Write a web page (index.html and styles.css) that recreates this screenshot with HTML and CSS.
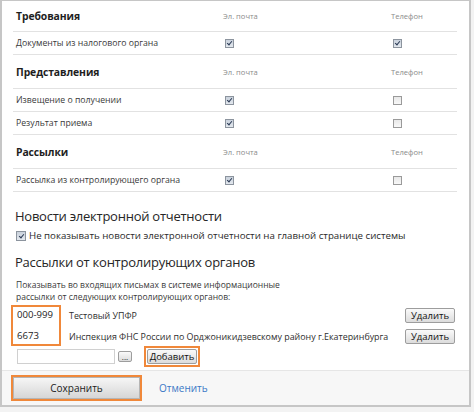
FILE: index.html
```html
<!DOCTYPE html>
<html lang="ru">
<head>
<meta charset="utf-8">
<link rel="stylesheet" href="styles.css">
</head>
<body>
<div class="frame">
  <div class="content">
    <div class="grid">
      <div class="hdr first"><span class="title">Требования</span><span class="col">Эл. почта</span><span class="col">Телефон</span></div>
      <div class="row"><span class="lbl">Документы из налогового органа</span><span class="cell"><i class="cb on"></i></span><span class="cell"><i class="cb on"></i></span></div>
      <div class="hdr"><span class="title">Представления</span><span class="col">Эл. почта</span><span class="col">Телефон</span></div>
      <div class="row"><span class="lbl">Извещение о получении</span><span class="cell"><i class="cb on"></i></span><span class="cell"><i class="cb"></i></span></div>
      <div class="row"><span class="lbl">Результат приема</span><span class="cell"><i class="cb on"></i></span><span class="cell"><i class="cb"></i></span></div>
      <div class="hdr"><span class="title">Рассылки</span><span class="col">Эл. почта</span><span class="col">Телефон</span></div>
      <div class="row"><span class="lbl">Рассылка из контролирующего органа</span><span class="cell"><i class="cb on"></i></span><span class="cell"><i class="cb"></i></span></div>
    </div>

    <h2 class="sec">Новости электронной отчетности</h2>
    <label class="check-line"><i class="cb on"></i>Не показывать новости электронной отчетности на главной странице системы</label>

    <h2 class="sec sec2">Рассылки от контролирующих органов</h2>
    <p class="note">Показывать во входящих письмах в системе информационные<br>рассылки от следующих контролирующих органов:</p>

    <div class="orgs">
      <div class="codes">
        <div class="code">000-999</div>
        <div class="code">6673</div>
      </div>
      <div class="names">
        <div class="org"><span>Тестовый УПФР</span><button class="btn">Удалить</button></div>
        <div class="org"><span>Инспекция ФНС России по Орджоникидзевскому району г.Екатеринбурга</span><button class="btn">Удалить</button></div>
      </div>
    </div>
    <div class="add">
      <span class="input"></span>
      <button class="btn dots">...</button>
      <span class="hl"><button class="btn">Добавить</button></span>
    </div>
  </div>
  <div class="footer">
    <span class="hl save-hl"><button class="save">Сохранить</button></span>
    <a class="cancel" href="#">Отменить</a>
  </div>
</div>
</body>
</html>
```
FILE: styles.css
```css
html, body { margin: 0; padding: 0; }
body {
  background: #f3f3f3;
  font-family: "Open Sans", "Noto Sans", sans-serif;
  color: #333;
  width: 474px;
  height: 412px;
  overflow: hidden;
}
.frame {
  box-sizing: border-box;
  width: 471px;
  height: 407px;
  background: #fff;
  border: 2px solid #c6c6c6;
  border-top-width: 1px;
  display: flex;
  flex-direction: column;
}
.content { padding: 0 12px 0 11px; flex: 1; }
.grid { display: flex; flex-direction: column; }
.hdr, .row {
  display: grid;
  grid-template-columns: 210px 168px 1fr;
  align-items: center;
  border-bottom: 1px solid #e2e2e2;
}
.hdr { height: 33px; }
.hdr.first { height: 30px; }
.row { height: 22px; }
.title { padding-left: 3px; font-weight: 700; font-size: 10.4px; color: #1e1e1e; letter-spacing: -0.1px; }
.col { font-size: 7.6px; color: #8a8a8a; }
.lbl { padding-left: 3px; font-size: 8.7px; color: #3a3a3a; }
.cell { padding-left: 2px; display: flex; align-items: center; }
.cb {
  display: inline-block;
  box-sizing: border-box;
  width: 9px; height: 9px;
  border: 1px solid #9a9a9a;
  background: linear-gradient(#e8e8e8, #f8f8f8);
  position: relative;
}
.cb.on { background: linear-gradient(#c9d1dc, #e3e8ee); border-color: #8c949e; }
.cb.on::after {
  content: "";
  position: absolute;
  left: 2px; top: 0px;
  width: 2px; height: 4px;
  border: solid #2b3a55;
  border-width: 0 1.5px 1.5px 0;
  transform: rotate(40deg);
}
.sec {
  margin: 15px 0 0 2px;
  font-weight: 400;
  font-size: 13px;
  letter-spacing: -0.25px;
  color: #262626;
  line-height: 18px;
}
.sec2 { margin-top: 10px; }
.check-line {
  display: flex; align-items: center; gap: 3px;
  margin: 4px 0 0 3px;
  font-size: 9.7px; color: #2a2a2a;
  line-height: 14px;
}
.check-line .cb { width: 10px; height: 10px; }
.check-line .cb.on::after { left: 2.5px; top: 0.5px; }
.note {
  margin: 8px 0 0 3px;
  font-size: 8.5px;
  line-height: 11.5px;
  color: #3a3a3a;
}
.orgs { display: flex; margin-top: 3px; }
.codes {
  box-sizing: border-box;
  width: 50px;
  height: 41px;
  margin-left: -2px;
  border: 2px solid #f0883a;
  padding: 1px 0 0 4px;
}
.code { height: 21px; line-height: 14px; font-size: 9.6px; color: #222; }
.names { flex: 1; padding-left: 8px; padding-top: 0; }
.org {
  display: flex; align-items: center; justify-content: space-between;
  height: 21px;
  font-size: 8.9px; color: #2e2e2e;
}
.btn {
  font-family: inherit;
  font-size: 9.5px;
  color: #111;
  background: linear-gradient(#fafafa, #dcdcdc);
  border: 1px solid #9d9d9d;
  border-radius: 2px;
  height: 15px;
  padding: 0 5px;
  line-height: 12px;
  margin: 0;
}
.org .btn { width: 50px; margin-right: 2px; }
.add { display: flex; align-items: center; margin: -1px 0 0 4px; }
.input {
  box-sizing: border-box;
  width: 98px; height: 15px;
  border: 1px solid #d0d0d0;
  background: #fff;
}
.dots { width: 14px; height: 11px; padding: 0; margin-left: 3px; font-size: 8px; line-height: 6px; }
.hl {
  display: inline-flex;
  border: 2px solid #f0883a;
  padding: 1px;
  margin-left: 12px;
}
.hl .btn { width: 50px; padding: 0; }
.footer {
  height: 34px;
  border-top: 1px solid #e6e6e6;
  background: #f7f7f7;
  display: flex;
  align-items: center;
  padding-left: 9px;
}
.save-hl { margin-left: 0; padding: 0; }
.save {
  font-family: inherit;
  width: 127px; height: 22px;
  font-size: 10px;
  color: #1b1b1b;
  border: 1px solid #b5b5b5;
  background: linear-gradient(#f6f6f6, #d6d6d6);
  margin: 0;
}
.cancel {
  margin-left: 17px;
  font-size: 10px;
  color: #3b77c6;
  text-decoration: none;
}
```
